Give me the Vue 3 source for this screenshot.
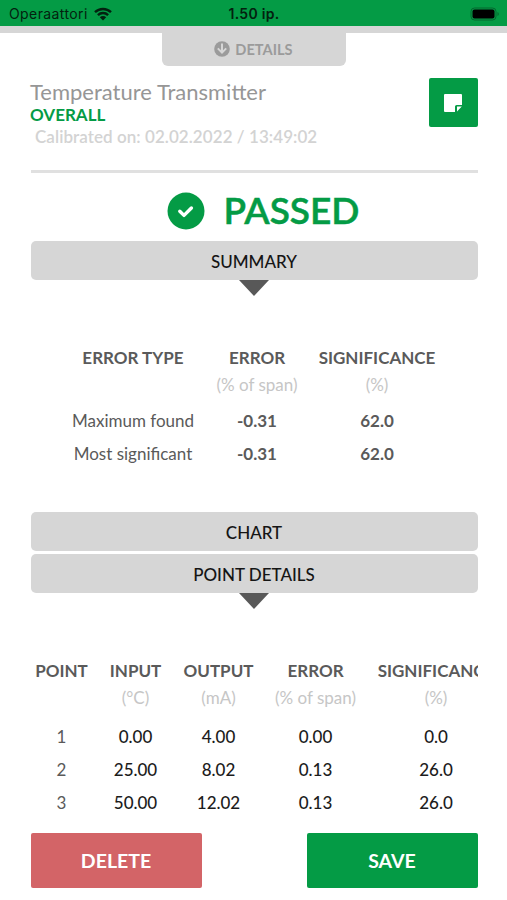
<template>
  <div class="screen">
    <!-- Status bar -->
    <header class="status-bar">
      <div class="carrier">
        <span>Operaattori</span>
        <svg class="wifi" viewBox="0 0 18 14">
          <path d="M1 5.2a11.6 11.6 0 0 1 16 0" />
          <path d="M3.9 8.1a7.4 7.4 0 0 1 10.2 0" />
          <path class="dot" d="M9 13.4 5.8 10.3a4.6 4.6 0 0 1 6.4 0z" />
        </svg>
      </div>
      <span class="time">1.50 ip.</span>
      <svg class="battery" viewBox="0 0 30 14">
        <rect class="shell" x="1" y="1" width="25" height="12" rx="3.5" />
        <rect x="2.5" y="2.5" width="22" height="9" rx="2" />
        <path class="cap" d="M27.5 5v4a2.2 2.2 0 0 0 0-4z" />
      </svg>
    </header>

    <div class="details-bar">
      <button class="details-tab">
        <svg viewBox="0 0 16 16">
          <circle cx="8" cy="8" r="7.8" />
          <path d="M8 2.4v8.6M3.8 7.4l4.2 4.2 4.2-4.2" />
        </svg>
        <span>DETAILS</span>
      </button>
    </div>

    <main class="content">
      <section class="device">
        <div>
          <h1>{{ device.name }}</h1>
          <h2>OVERALL</h2>
          <p>Calibrated on: {{ device.calibrated }}</p>
        </div>
        <button class="note-button">
          <svg viewBox="0 0 18 18">
            <path d="M1 0h16a1 1 0 0 1 1 1v10h-5.4A1.6 1.6 0 0 0 11 12.6V18H1a1 1 0 0 1-1-1V1a1 1 0 0 1 1-1z" />
            <path d="M13 12.6h4.8L13 17.6z" />
          </svg>
        </button>
      </section>

      <div class="result">
        <svg viewBox="0 0 38 38">
          <circle cx="19" cy="19" r="18.5" />
          <path d="M12.8 19.2l4.2 4.2 7.4-7.4" />
        </svg>
        <span>PASSED</span>
      </div>

      <button class="section-bar open" @click="toggle('summary')">SUMMARY</button>
      <div v-show="opened.summary" class="panel summary">
        <table>
          <colgroup>
            <col v-for="(col, i) in summaryColumns" :key="i" :style="{ width: col.width + 'px' }" />
          </colgroup>
          <thead>
            <tr>
              <th v-for="col in summaryColumns" :key="col.label">{{ col.label }}</th>
            </tr>
            <tr class="units">
              <th v-for="col in summaryColumns" :key="col.label">{{ col.unit }}</th>
            </tr>
          </thead>
          <tbody>
            <tr v-for="row in summaryRows" :key="row[0]">
              <td v-for="(value, i) in row" :key="i">{{ value }}</td>
            </tr>
          </tbody>
        </table>
      </div>

      <button class="section-bar">CHART</button>
      <button class="section-bar open" @click="toggle('points')">POINT DETAILS</button>
      <div v-show="opened.points" class="panel points">
        <table>
          <colgroup>
            <col v-for="(col, i) in pointColumns" :key="i" :style="{ width: col.width + 'px' }" />
          </colgroup>
          <thead>
            <tr>
              <th v-for="col in pointColumns" :key="col.label">{{ col.label }}</th>
            </tr>
            <tr class="units">
              <th v-for="col in pointColumns" :key="col.label">{{ col.unit }}</th>
            </tr>
          </thead>
          <tbody>
            <tr v-for="row in pointRows" :key="row[0]">
              <td v-for="(value, i) in row" :key="i">{{ value }}</td>
            </tr>
          </tbody>
        </table>
      </div>
    </main>

    <footer class="actions">
      <button class="delete">DELETE</button>
      <button class="save">SAVE</button>
    </footer>
  </div>
</template>

<script setup>
import { reactive } from "vue";

const device = {
  name: "Temperature Transmitter",
  calibrated: "02.02.2022 / 13:49:02",
};

const opened = reactive({ summary: true, points: true });
const toggle = (name) => (opened[name] = !opened[name]);

const summaryColumns = [
  { label: "ERROR TYPE", unit: "", width: 144 },
  { label: "ERROR", unit: "(% of span)", width: 104 },
  { label: "SIGNIFICANCE", unit: "(%)", width: 136 },
];

const summaryRows = [
  ["Maximum found", "-0.31", "62.0"],
  ["Most significant", "-0.31", "62.0"],
];

const pointColumns = [
  { label: "POINT", unit: "", width: 63 },
  { label: "INPUT", unit: "(°C)", width: 85 },
  { label: "OUTPUT", unit: "(mA)", width: 81 },
  { label: "ERROR", unit: "(% of span)", width: 113 },
  { label: "SIGNIFICANCE", unit: "(%)", width: 128 },
];

const pointRows = [
  ["1", "0.00", "4.00", "0.00", "0.0"],
  ["2", "25.00", "8.02", "0.13", "26.0"],
  ["3", "50.00", "12.02", "0.13", "26.0"],
];
</script>

<style>
body { margin: 0; background: #fff; }
</style>

<style scoped>
.screen { width: 507px; height: 900px; display: flex; flex-direction: column; overflow: hidden; background: #fff; font-family: Lato, "Liberation Sans", sans-serif; }
button { border: none; margin: 0; padding: 0; font-family: inherit; cursor: pointer; }

.status-bar { height: 26px; flex-shrink: 0; display: grid; grid-template-columns: 1fr auto 1fr; align-items: center; padding: 2px 7px 0 9px; box-sizing: border-box; background: #049b45; color: #03210f; font-family: Inter, sans-serif; font-size: 14px; line-height: 24px; }
.carrier { display: flex; align-items: center; gap: 6px; letter-spacing: 0.4px; }
.wifi { width: 18px; height: 14px; fill: none; stroke: #03210f; stroke-width: 2.4; }
.wifi .dot { fill: #03210f; stroke: none; }
.time { font-weight: 600; letter-spacing: 0.3px; margin-right: 1px; }
.battery { width: 30px; height: 14px; justify-self: end; fill: #000; }
.battery .shell { fill: none; stroke: #04662f; stroke-width: 1; }
.battery .cap { fill: #04662f; }

.details-bar { flex-shrink: 0; height: 40px; display: flex; justify-content: center; background: linear-gradient(#d6d6d6 6.5px, transparent 6.5px); }
.details-tab { width: 184px; height: 40px; display: flex; align-items: center; justify-content: center; gap: 5px; padding-top: 6px; box-sizing: border-box; border-radius: 0 0 6px 6px; background: #d6d6d6; color: #9b9b9b; font-size: 14.6px; font-weight: 700; }
.details-tab svg { width: 16px; height: 16px; fill: #9b9b9b; }
.details-tab path { fill: none; stroke: #d6d6d6; stroke-width: 2; }

.content { flex: 1; min-height: 0; padding: 0 29.5px 0 30.5px; overflow: hidden; }
.device { height: 107px; display: flex; justify-content: space-between; align-items: flex-start; box-sizing: border-box; padding-top: 12px; border-bottom: 3px solid #e0e0e0; }
.device h1 { margin: 1px 0 0 -0.5px; font-size: 22px; line-height: 25px; font-weight: 400; color: #969696; }
.device h2 { margin: 1px 0 0 -0.5px; font-size: 17px; line-height: 20px; font-weight: 700; color: #049b45; }
.device p { margin: 0 0 0 4.5px; font-size: 17px; line-height: 23px; font-weight: 600; letter-spacing: 0.06px; color: #d3d3d3; }
.note-button { width: 49px; height: 49px; display: flex; align-items: center; justify-content: center; border-radius: 2px; background: #049b45; }
.note-button svg { width: 18px; height: 18px; fill: #fff; }

.result { height: 68px; display: flex; align-items: center; justify-content: center; gap: 19px; padding-left: 18px; color: #049b45; font-size: 37px; font-weight: 600; }
.result svg { width: 38px; height: 38px; fill: #049b45; margin-top: 7px; }
.result span { margin-top: 5px; -webkit-text-stroke: 0.5px #049b45; }
.result path { fill: none; stroke: #fff; stroke-width: 3.4; stroke-linecap: round; stroke-linejoin: round; }

.section-bar { position: relative; display: block; width: 100%; height: 39px; padding-top: 2px; margin-bottom: 3px; border-radius: 5px; background: #d6d6d6; color: #151515; font-size: 17px; font-weight: 500; }
.section-bar.open::after { content: ""; position: absolute; left: 50%; top: 100%; margin-left: -15px; border: 16px solid transparent; border-width: 16px 15px 0; border-top-color: #585858; }

.panel { overflow: hidden; color: #5a5a5a; font-size: 17px; }
.panel table { table-layout: fixed; border-collapse: collapse; width: 0; margin-left: -0.5px; }
.panel th, .panel td { padding: 0; text-align: center; white-space: nowrap; }
.panel th { height: 27px; font-weight: 700; line-height: 27px; }
.panel td { height: 33px; line-height: 33px; font-weight: 400; }
.panel .units th { font-weight: 400; color: #c6c6c6; vertical-align: top; }
.summary { height: 229px; padding: 61px 0 0 31px; box-sizing: border-box; }
.summary .units th { height: 33px; }
.summary td + td { font-weight: 700; }
.points { padding-top: 61px; }
.points .units th { height: 36px; }
.points td + td { color: #1c1c1c; font-weight: 500; }

.actions { flex-shrink: 0; display: flex; justify-content: space-between; padding: 13px 29.5px 12px 30.5px; }
.actions button { width: 171px; height: 55px; border-radius: 2px; color: #fff; font-size: 19.5px; font-weight: 700; }
.actions .delete { background: #d36467; }
.actions .save { background: #049b45; }
</style>
